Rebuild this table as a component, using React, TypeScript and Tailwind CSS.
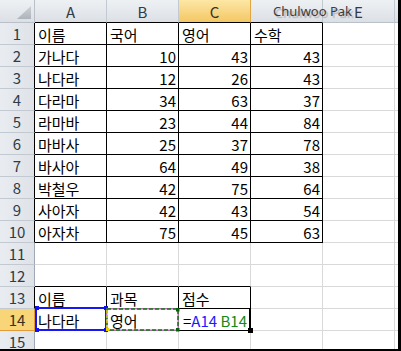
import clsx from 'clsx';

type Val = string | number | null;

const grid: Val[][] = [
  ['이름', '국어', '영어', '수학', null],
  ['가나다', 10, 43, 43, null],
  ['나다라', 12, 26, 43, null],
  ['다라마', 34, 63, 37, null],
  ['라마바', 23, 44, 84, null],
  ['마바사', 25, 37, 78, null],
  ['바사아', 64, 49, 38, null],
  ['박철우', 42, 75, 64, null],
  ['사아자', 42, 43, 54, null],
  ['아자차', 75, 45, 63, null],
  [null, null, null, null, null],
  [null, null, null, null, null],
  ['이름', '과목', '점수', null, null],
  ['나다라', '영어', null, null, null],
  [null, null, null, null, null],
];

const letters = ['A', 'B', 'C', 'D', 'E'];

// 표 영역: A1:D10, A13:C14
const inTable = (r: number, c: number) =>
  (r >= 1 && r <= 10 && c >= 1 && c <= 4) || (r >= 13 && r <= 14 && c >= 1 && c <= 3);

function Corner() {
  return (
    <div className="relative border-r border-b border-r-[#b9c0c9] border-b-[#b9c0c9] bg-gradient-to-b from-[#eef1f4] to-[#dcdfe4]">
      <svg className="absolute left-0 top-0" width="34" height="22" viewBox="0 0 34 22">
        <defs>
          <linearGradient id="tri" x1="0" y1="0" x2="0" y2="1">
            <stop offset="0" stopColor="#cdd1d6" />
            <stop offset="1" stopColor="#aeb4bb" />
          </linearGradient>
        </defs>
        <polygon points="31,6 31,19 17,19" fill="url(#tri)" />
      </svg>
    </div>
  );
}

function ColHeader({ c }: { c: number }) {
  const selected = c === 3;
  return (
    <div
      className={clsx(
        'relative flex items-center justify-center border-r border-b text-[15px] leading-none',
        selected
          ? 'bg-gradient-to-b from-[#fce7a4] to-[#f4c763] border-r-[#e2a645] text-[#3a3020]'
          : 'bg-gradient-to-b from-[#eef1f4] to-[#dcdfe4] border-r-[#c3c9d1] text-[#2f3b48]',
        c <= 4 ? 'border-b-black' : selected ? 'border-b-[#e2a645]' : 'border-b-[#b9c0c9]'
      )}
    >
      {c === 4 ? (
        // 작성자 표시 (D열 머리글 위)
        <span className="absolute left-[22px] top-[1px] z-10 whitespace-nowrap text-[13px] leading-[20px] text-[#3c3c3c] font-['Noto_Sans',sans-serif] [text-shadow:2px_2px_1px_rgba(0,0,0,0.22)]">
          Chulwoo Pak
        </span>
      ) : (
        letters[c - 1]
      )}
    </div>
  );
}

function RowHeader({ r }: { r: number }) {
  const selected = r === 14;
  const black = (r >= 1 && r <= 10) || r === 13;
  return (
    <div
      className={clsx(
        'flex items-center justify-center border-r border-b text-[15px] leading-none',
        selected
          ? 'bg-[#f8d577] border-r-[#e29a3a] border-b-[#e29a3a] text-[#3a3020]'
          : 'bg-gradient-to-r from-[#e9ecf0] to-[#dfe3e8] border-b-[#c3c9d1] text-[#2f3b48]',
        !selected && (black ? 'border-r-black' : 'border-r-[#9fa9b5]')
      )}
    >
      {r}
    </div>
  );
}

function Cell({ r, c }: { r: number; c: number }) {
  const v = grid[r - 1][c - 1];
  const num = typeof v === 'number';
  const rightBlack = inTable(r, c);
  const bottomBlack = inTable(r, c) || (r === 12 && c <= 3);

  return (
    <div
      className={clsx(
        'relative flex items-end whitespace-nowrap border-r border-b text-[15px] leading-none pb-[2px]',
        rightBlack ? 'border-r-black' : 'border-r-[#d9d9d9]',
        bottomBlack ? 'border-b-black' : 'border-b-[#d9d9d9]',
        num ? 'justify-end pr-[2px]' : 'pl-[3px]'
      )}
    >
      {v}

      {/* 선택된 셀 A14 */}
      {r === 14 && c === 1 && (
        <div className="absolute -top-[2px] left-0 -right-px -bottom-px z-10 border-2 border-[#1717f5]">
          <span className="absolute -left-[2px] -top-[3px] w-[4px] h-[4px] bg-[#1010f0]" />
          <span className="absolute -right-[3px] -top-[3px] w-[4px] h-[4px] bg-[#1010f0]" />
          <span className="absolute -left-[2px] -bottom-[3px] w-[4px] h-[4px] bg-[#1010f0]" />
          <span className="absolute -right-[3px] -bottom-[3px] w-[4px] h-[4px] bg-[#1010f0]" />
        </div>
      )}

      {/* 참조 B14 */}
      {r === 14 && c === 2 && (
        <svg className="absolute -left-px -top-px z-10" width="74" height="24" viewBox="0 0 74 24">
          <rect x="1" y="1" width="71" height="21" fill="none" stroke="#f28ef0" strokeWidth="1.5" />
          <rect x="1" y="1" width="71" height="21" fill="none" stroke="#127a12" strokeWidth="1.5" strokeDasharray="4 2" />
          <line x1="1" y1="2" x2="1" y2="21" stroke="#e8d200" strokeWidth="1.5" strokeDasharray="3 2" />
          <rect x="70" y="0" width="3.5" height="3.5" fill="#0b5e0b" />
          <rect x="70" y="20" width="3.5" height="3.5" fill="#0b5e0b" />
          <rect x="0" y="20" width="3" height="3" fill="#e8d200" />
        </svg>
      )}

      {/* 수식 입력 중 C14 */}
      {r === 14 && c === 3 && (
        <>
          <span className="pl-[1px]">
            <span className="text-black">=</span>
            <span className="text-[#1a1aff]">A14</span>{' '}
            <span className="text-[#138a13]">B14</span>
          </span>
          <div className="absolute top-0 -right-px -bottom-px w-[2px] bg-black" />
          <div className="absolute -right-[3px] -bottom-[3px] z-10 w-[5px] h-[5px] bg-black" />
        </>
      )}
    </div>
  );
}

export default function App() {
  const rows = Array.from({ length: 15 }, (_, i) => i + 1);
  const cols = [1, 2, 3, 4, 5];

  return (
    <div className="w-[401px] h-[351px] overflow-hidden bg-white border-r-[3px] border-b-2 border-black font-['Noto_Sans_CJK_KR','Noto_Sans',sans-serif] text-black">
      <div className="grid grid-cols-[35px_repeat(5,72px)_1fr] grid-rows-[23px_repeat(15,22px)]">
        <Corner />
        {cols.map((c) => (
          <ColHeader key={c} c={c} />
        ))}
        <div className="border-b border-b-[#b9c0c9] bg-gradient-to-b from-[#eef1f4] to-[#dcdfe4]" />

        {rows.map((r) => (
          <div key={r} className="contents">
            <RowHeader r={r} />
            {cols.map((c) => (
              <Cell key={c} r={r} c={c} />
            ))}
            <div className="border-b border-b-[#d9d9d9]" />
          </div>
        ))}
      </div>
    </div>
  );
}
